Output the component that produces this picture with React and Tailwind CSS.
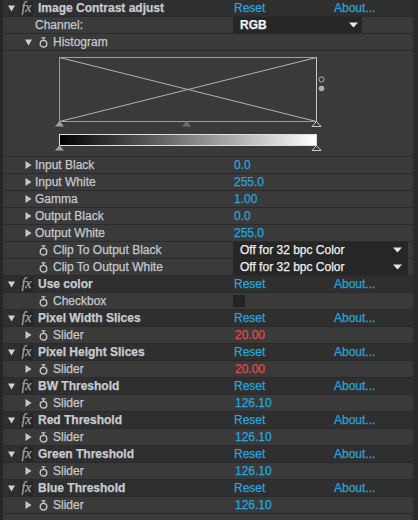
import React from "react";

const BLUE = "text-[#27a6dd]";

function TriDown({ className = "" }) {
  return (
    <svg width="7" height="7" viewBox="0 0 7 7" className={className}>
      <polygon points="0,0.5 7,0.5 3.5,6.5" fill="#d0d0d0" />
    </svg>
  );
}
function TriRight({ className = "" }) {
  return (
    <svg width="7" height="8" viewBox="0 0 7 8" className={className}>
      <polygon points="0.5,0 6.5,4 0.5,8" fill="#c8c8c8" />
    </svg>
  );
}
function Watch({ className = "" }) {
  return (
    <svg width="9" height="11" viewBox="0 0 9 11" className={className}>
      <line x1="2.5" y1="0.8" x2="6.5" y2="0.8" stroke="#c8c8c8" strokeWidth="1.2" />
      <line x1="4.5" y1="0.8" x2="4.5" y2="3" stroke="#c8c8c8" strokeWidth="1.2" />
      <circle cx="4.5" cy="6.7" r="3.3" fill="none" stroke="#c8c8c8" strokeWidth="1.4" />
    </svg>
  );
}
function Fx({ className = "" }) {
  return (
    <div
      className={`w-[13px] h-[15px] bg-[#262626] flex items-center justify-center text-[#a8a8a8] italic text-[14px] leading-none ${className}`}
      style={{ fontFamily: '"Liberation Serif", serif' }}
    >
      fx
    </div>
  );
}
function Arrow() {
  return (
    <svg width="9" height="6" viewBox="0 0 9 6">
      <polygon points="0,0.5 9,0.5 4.5,5.5" fill="#e6e6e6" />
    </svg>
  );
}

function Row({ header, children, right }) {
  return (
    <div
      className={`flex h-[17px] items-center border-b border-[#2a2a2a] ${
        header ? "bg-[#2f2f2f]" : "bg-[#3a3a3a]"
      }`}
    >
      <div className="w-[230px] flex items-center shrink-0">{children}</div>
      <div className="flex-1 flex items-center h-full">{right}</div>
    </div>
  );
}

function Header({ title }) {
  return (
    <Row
      header
      right={
        <>
          <span className={`w-[101px] pl-px ${BLUE}`}>Reset</span>
          <span className={BLUE}>About...</span>
        </>
      }
    >
      <TriDown className="ml-[5px]" />
      <Fx className="ml-[5px]" />
      <span className="ml-[5px] font-bold text-[#c6cad2]">{title}</span>
    </Row>
  );
}

function Prop({ label, value, red }) {
  return (
    <Row
      right={
        <span className={`pl-px ${red ? "text-[#e24b47]" : BLUE}`}>{value}</span>
      }
    >
      <TriRight className="ml-[22px]" />
      <span className="ml-[3px] text-[#c4c8ce]">{label}</span>
    </Row>
  );
}

function SliderRow({ value, red }) {
  return (
    <Row
      right={
        <span className={`pl-[2px] ${red ? "text-[#e24b47]" : BLUE}`}>{value}</span>
      }
    >
      <TriRight className="ml-[22px]" />
      <Watch className="ml-[7px]" />
      <span className="ml-[5px] text-[#c4c8ce]">Slider</span>
    </Row>
  );
}

function ClipRow({ label }) {
  return (
    <Row
      right={
        <div className="w-[175px] h-[16px] bg-[#262626] flex items-center justify-between pl-[7px] pr-[6px]">
          <span className="text-[#eeeeee]">Off for 32 bpc Color</span>
          <Arrow />
        </div>
      }
    >
      <Watch className="ml-[36px]" />
      <span className="ml-[5px] text-[#c4c8ce]">{label}</span>
    </Row>
  );
}

function Histogram() {
  return (
    <div className="h-[106px] bg-[#3a3a3a] border-b border-[#2a2a2a] flex">
      <svg
        width="290"
        height="105"
        viewBox="50 51 290 105"
        className="ml-[47px]"
      >
        <defs>
          <linearGradient id="g" x1="0" x2="1" y1="0" y2="0">
            <stop offset="0" stopColor="#000" />
            <stop offset="1" stopColor="#fff" />
          </linearGradient>
        </defs>
        <rect x="59.5" y="57.5" width="257" height="64" fill="none" stroke="#9c9c9c" strokeWidth="1" />
        <line x1="59.5" y1="57.5" x2="316.5" y2="121.5" stroke="#b4b4b4" strokeWidth="1" />
        <line x1="59.5" y1="121.5" x2="316.5" y2="57.5" stroke="#b4b4b4" strokeWidth="1" />
        <line x1="316.5" y1="57.5" x2="316.5" y2="121.5" stroke="#c8c8c8" strokeWidth="1" />
        <polygon points="59.5,121 55,126.5 64,126.5" fill="#a0a0a0" />
        <polygon points="186.5,121 182,126.5 191,126.5" fill="#6e6e6e" />
        <polygon points="316.5,121.5 312,126.5 321,126.5" fill="none" stroke="#c8c8c8" strokeWidth="1" />
        <circle cx="321.5" cy="79.5" r="2.6" fill="none" stroke="#b0b0b0" strokeWidth="1" />
        <circle cx="321.5" cy="88.5" r="2.8" fill="#b0b0b0" />
        <rect x="59.5" y="134.5" width="257" height="11" fill="url(#g)" stroke="#dedede" strokeWidth="1" />
        <polygon points="59.5,145 55,150.5 64,150.5" fill="#a0a0a0" />
        <polygon points="316.5,145.5 312,150.5 321,150.5" fill="none" stroke="#c8c8c8" strokeWidth="1" />
      </svg>
    </div>
  );
}

export default function App() {
  return (
    <div
      className="w-[418px] h-[520px] flex bg-[#3a3a3a] text-[12px] leading-none overflow-hidden [-webkit-text-stroke:0.25px_currentColor]"
      style={{ fontFamily: '"Liberation Sans", Arial, sans-serif' }}
    >
      <div className="w-[3px] bg-[#262626] shrink-0" />
      <div className="flex-1 flex flex-col">
        <Header title="Image Contrast adjust" />
        <Row
          right={
            <div className="w-[129px] h-[16px] bg-[#262626] flex items-center justify-between pl-[7px] pr-[4px]">
              <span className="font-bold text-[#f0f0f0]">RGB</span>
              <Arrow />
            </div>
          }
        >
          <span className="ml-[32px] text-[#c4c8ce]">Channel:</span>
        </Row>
        <Row>
          <TriDown className="ml-[22px]" />
          <Watch className="ml-[7px]" />
          <span className="ml-[5px] text-[#c4c8ce]">Histogram</span>
        </Row>
        <Histogram />
        <Prop label="Input Black" value="0.0" />
        <Prop label="Input White" value="255.0" />
        <Prop label="Gamma" value="1.00" />
        <Prop label="Output Black" value="0.0" />
        <Prop label="Output White" value="255.0" />
        <ClipRow label="Clip To Output Black" />
        <ClipRow label="Clip To Output White" />
        <Header title="Use color" />
        <Row right={<div className="w-[12px] h-[12px] bg-[#232323]" />}>
          <Watch className="ml-[36px]" />
          <span className="ml-[5px] text-[#c4c8ce]">Checkbox</span>
        </Row>
        <Header title="Pixel Width Slices" />
        <SliderRow value="20.00" red />
        <Header title="Pixel Height Slices" />
        <SliderRow value="20.00" red />
        <Header title="BW Threshold" />
        <SliderRow value="126.10" />
        <Header title="Red Threshold" />
        <SliderRow value="126.10" />
        <Header title="Green Threshold" />
        <SliderRow value="126.10" />
        <Header title="Blue Threshold" />
        <SliderRow value="126.10" />
      </div>
      <div className="w-[5px] bg-[#2b2b2b] shrink-0" />
    </div>
  );
}
